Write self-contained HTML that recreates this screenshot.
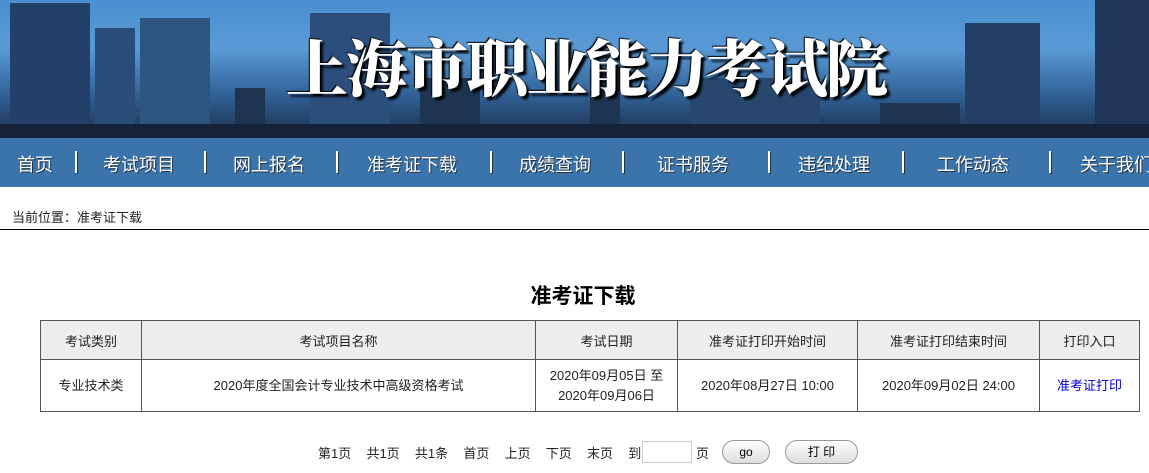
<html><head><style>
body{margin:0;width:1149px;height:473px;overflow:hidden;background:#fff;font-family:"Liberation Sans","Noto Sans CJK SC",sans-serif;position:relative}
.ban{position:absolute;left:0;top:0;width:1149px;height:138px;background:linear-gradient(180deg,#4a8fd0 0%,#5a9ad6 35%,#2f5f94 70%,#1d2f4a 100%);overflow:hidden}
.b{position:absolute;bottom:0;background:#1e3552}
.title{position:absolute;left:286px;top:26px;font-family:"Noto Serif CJK SC",serif;font-size:62px;font-weight:900;color:#fff;letter-spacing:-2px;text-shadow:3px 3px 2px #000,-1px -1px 1px #000;white-space:nowrap;line-height:78px}
.nav{position:absolute;left:0;top:138px;width:1149px;height:49px;background:#3a74aa;color:#fff;font-size:18px}
.nav span{position:absolute;top:13px;white-space:nowrap;text-shadow:1px 1px 0 #234}
.nav i{position:absolute;top:13px;width:2px;height:22px;background:#fff;box-shadow:1px 1px 0 #234}
.crumb{position:absolute;left:12px;top:207px;font-size:13px;color:#222}
.line{position:absolute;left:0;top:229px;width:1149px;height:1px;background:#000}
h1{position:absolute;left:0;width:1166px;top:280px;margin:0;text-align:center;font-size:21px;font-weight:bold;color:#000}
table{position:absolute;left:40px;top:320px;border-collapse:collapse;font-size:13px;color:#222}
td{border:1px solid #555;text-align:center;padding:0}
tr.h td{background:#eeeeee;height:39px}
tr.r td{height:52px;line-height:20px}
.pg{position:absolute;top:443px;font-size:13px;color:#222;white-space:nowrap}
.inp{position:absolute;left:642px;top:441px;width:48px;height:20px;border:1px solid #ccc}
.btn{position:absolute;top:440px;height:22px;border:1px solid #999;border-radius:12px;background:linear-gradient(#fff,#ddd);font-size:12px;text-align:center;line-height:22px}
</style></head><body>
<div class="ban">
<div class="b" style="left:10px;width:80px;height:135px;background:#23406a"></div>
<div class="b" style="left:95px;width:40px;height:110px;background:#2a4c78"></div>
<div class="b" style="left:140px;width:70px;height:120px;background:#2e5480"></div>
<div class="b" style="left:235px;width:30px;height:50px"></div>
<div class="b" style="left:310px;width:80px;height:125px;background:#2b4e7c"></div>
<div class="b" style="left:420px;width:60px;height:60px"></div>
<div class="b" style="left:590px;width:30px;height:70px"></div>
<div class="b" style="left:690px;width:130px;height:60px;background:#28476e"></div>
<div class="b" style="left:880px;width:80px;height:35px"></div>
<div class="b" style="left:965px;width:75px;height:115px;background:#243f66"></div>
<div class="b" style="left:1095px;width:54px;height:138px;background:#1f3658"></div>
<div class="b" style="left:0;width:1149px;height:14px;background:#14233a"></div>
<div class="title">上海市职业能力考试院</div>
</div>
<div class="nav">
<span style="left:17px">首页</span><i style="left:75px"></i>
<span style="left:103px">考试项目</span><i style="left:204px"></i>
<span style="left:233px">网上报名</span><i style="left:336px"></i>
<span style="left:367px">准考证下载</span><i style="left:490px"></i>
<span style="left:519px">成绩查询</span><i style="left:622px"></i>
<span style="left:657px">证书服务</span><i style="left:768px"></i>
<span style="left:798px">违纪处理</span><i style="left:902px"></i>
<span style="left:937px">工作动态</span><i style="left:1049px"></i>
<span style="left:1080px">关于我们</span>
</div>
<div class="crumb">当前位置：准考证下载</div>
<div class="line"></div>
<h1>准考证下载</h1>
<table>
<tr class="h"><td style="width:100px">考试类别</td><td style="width:393px">考试项目名称</td><td style="width:141px">考试日期</td><td style="width:179px">准考证打印开始时间</td><td style="width:181px">准考证打印结束时间</td><td style="width:99px">打印入口</td></tr>
<tr class="r"><td>专业技术类</td><td>2020年度全国会计专业技术中高级资格考试</td><td>2020年09月05日 至<br>2020年09月06日</td><td>2020年08月27日 10:00</td><td>2020年09月02日 24:00</td><td style="color:#00c">准考证打印</td></tr>
</table>
<div class="pg" style="left:318px;word-spacing:4px">第1页&nbsp; 共1页&nbsp; 共1条&nbsp; 首页&nbsp; 上页&nbsp; 下页&nbsp; 末页&nbsp; 到</div>
<div class="inp"></div>
<div class="pg" style="left:696px">页</div>
<div class="btn" style="left:722px;width:46px">go</div>
<div class="btn" style="left:785px;width:71px">打 印</div>
</body></html>
